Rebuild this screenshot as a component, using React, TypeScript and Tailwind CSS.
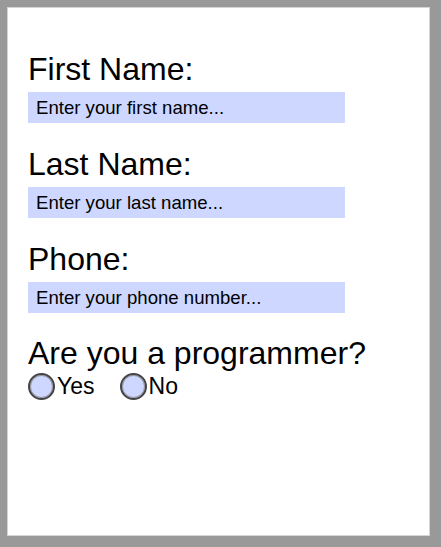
const fields = [
  { label: 'First Name:', placeholder: 'Enter your first name...' },
  { label: 'Last Name:', placeholder: 'Enter your last name...' },
  { label: 'Phone:', placeholder: 'Enter your phone number...' },
]

function Radio({ label }: { label: string }) {
  return (
    <label className="flex items-center">
      <span className="h-[27px] w-[27px] rounded-full border-2 border-[#444] bg-[#cdd7ff] shadow-[inset_0_0_0_1px_#9a9aa8]" />
      <span className="ml-[2px] text-[23px] leading-[27px]">{label}</span>
    </label>
  )
}

export default function App() {
  return (
    <div className="h-[547px] w-[441px] bg-[#999999] pl-[7px] pt-[7px] font-['Liberation_Sans',Arial,sans-serif] text-black">
      <div className="h-[529px] w-[423px] border border-[#d4d4d4] bg-white pl-[20px] pt-[43px]">
        {fields.map((f) => (
          <div key={f.label} className="mb-[23px]">
            <div className="text-[32px] leading-[36px]">{f.label}</div>
            <div className="mt-[5px] flex h-[31px] w-[317px] items-center bg-[#cdd7ff] pl-[8px] text-[18.6px]">
              {f.placeholder}
            </div>
          </div>
        ))}
        <div className="-mt-[1px] text-[32px] leading-[36px]">Are you a programmer?</div>
        <div className="mt-[2px] flex items-center gap-[25px]">
          <Radio label="Yes" />
          <Radio label="No" />
        </div>
      </div>
    </div>
  )
}
